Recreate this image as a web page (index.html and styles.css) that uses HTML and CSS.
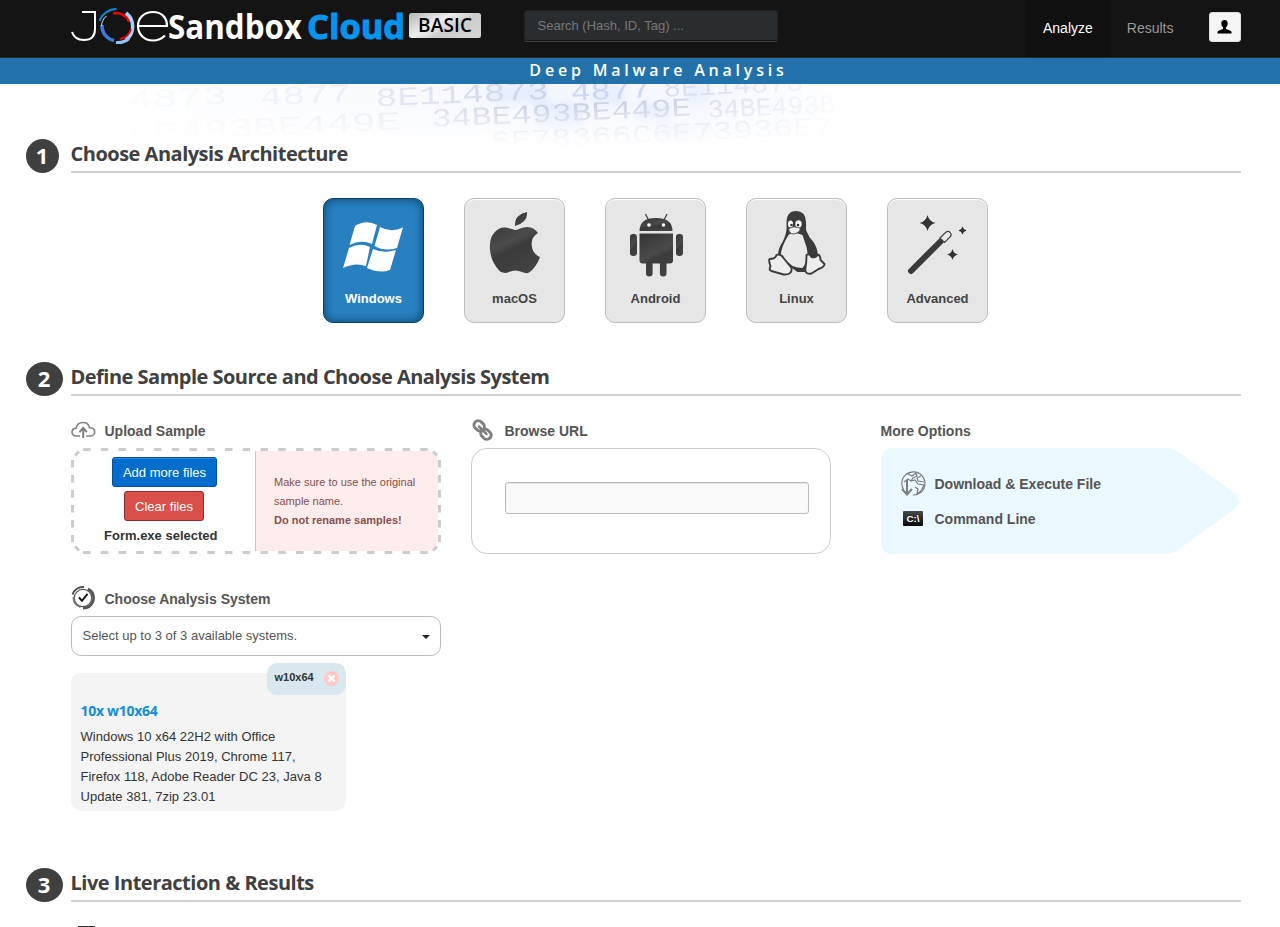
FILE: index.html
```html
<!DOCTYPE html>
<html lang="en">
<head>
<meta charset="utf-8">
<title>Joe Sandbox Cloud Basic</title>
<link rel="stylesheet" href="styles.css">
</head>
<body>
<header class="navbar">
  <svg class="logo" width="412" height="50" viewBox="70 0 412 50">
    <defs><linearGradient id="silver" x1="0" y1="0" x2="1" y2=".6"><stop offset="0" stop-color="#b4b4b4"/><stop offset=".45" stop-color="#eee"/><stop offset=".7" stop-color="#ccc"/><stop offset="1" stop-color="#d2d2d2"/></linearGradient></defs>
    <path d="M82 12h13v17c0 8-4 11-11 11-6 0-10-2-12-8" fill="none" stroke="#fff" stroke-width="2"/>
    <g fill="none">
      <path d="M99.500 21a18 18 0 0 1 17-12" stroke="#0b8ad8" stroke-width="2"/>
      <path d="M113 13.500a13.500 13.500 0 0 1 16 8.500" stroke="#e00" stroke-width="2.400"/>
      <path d="M126 13a17 17 0 0 1 0 27" stroke="#a5d2f7" stroke-width="3.500"/>
      <path d="M131 29a14 14 0 0 1-11 10" stroke="#e00" stroke-width="1.800"/>
      <path d="M102 25a15 15 0 0 0 12 15.500" stroke="#3c7bdd" stroke-width="3.500"/>
      <path d="M101.500 26a14 14 0 0 1 5-10" stroke="#ddd"/>
      <path d="M116 42.500a17 17 0 0 0 13-4" stroke="#8bc5f5" stroke-width="3"/>
      <path d="M138 26h29c0-9-6-14-14-14-9 0-15 6-15 14s6 14.500 15 14.500c5 0 9-2 12-5" stroke="#fff" stroke-width="2.200"/>
    </g>
    <text class="logo-face" x="168" y="38.500" textLength="134" lengthAdjust="spacingAndGlyphs" fill="#fff">Sandbox</text>
    <text class="logo-face logo-cloud" x="307" y="38.500" textLength="98" lengthAdjust="spacingAndGlyphs" fill="#0094ec" stroke="#0094ec">Cloud</text>
    <rect x="409" y="13" width="72" height="25" rx="2.500" fill="url(#silver)"/>
    <text class="logo-basic" x="418" y="32" textLength="54" lengthAdjust="spacing">BASIC</text>
  </svg>
  <div class="search">Search (Hash, ID, Tag) ...</div>
  <nav class="nav"><a class="nav-item active">Analyze</a><a class="nav-item">Results</a></nav>
  <button class="user" aria-label="Account"><svg width="16" height="16" viewBox="0 0 16 16"><path d="M7.500 1C5.300 1 4.200 2.500 4.300 4.500c0 1.700.8 3 1.700 3.800v1.700L2 11.500Q.5 12 .5 13v1.500h14V13q0-1-1.500-1.500L9 10V8.300c.9-.8 1.700-2.100 1.700-3.800C10.800 2.500 9.700 1 7.500 1z"/></svg></button>
</header>
<div class="tagline"><span>Deep Malware Analysis</span></div>
<main class="page">
  <svg class="digits" width="900" height="70" viewBox="0 84 900 70" aria-hidden="true">
    <defs>
      <linearGradient id="fx"><stop offset=".08" stop-color="#000"/><stop offset=".4" stop-color="#777"/><stop offset=".6" stop-color="#fff"/><stop offset=".8" stop-color="#ccc"/><stop offset=".95" stop-color="#000"/></linearGradient>
      <linearGradient id="fy" x2="0" y2="1"><stop offset=".3" stop-color="#fff" stop-opacity="0"/><stop offset=".9" stop-color="#fff"/></linearGradient>
      <mask id="fade"><rect y="84" width="900" height="70" fill="url(#fx)"/></mask>
      <filter id="soft"><feGaussianBlur stdDeviation="3"/></filter>
    </defs>
    <g mask="url(#fade)">
      <rect x="60" y="84" width="800" height="62" fill="#f4f7fe"/>
      <path filter="url(#soft)" d="M487 84h60v19h-60zM592 84h32v21h-32zM686 84h22v18h-22zM535 102h50v27h-50zM636 103h36v20h-36zM660 125h50v20h-50z" fill="#e6eeff"/>
      <g class="hex" fill="#d6dbe9">
        <g transform="rotate(-2.500 450 104)"><text x="128" y="94" textLength="100" lengthAdjust="spacingAndGlyphs">4873</text><text x="260" y="97" textLength="92" lengthAdjust="spacingAndGlyphs">4877</text>
        <text x="376" y="103" textLength="173" lengthAdjust="spacingAndGlyphs" fill="#cdd5e8">8E114873</text><text x="571" y="106" textLength="80" lengthAdjust="spacingAndGlyphs" fill="#c9d5f5">4877</text><text x="664" y="106" textLength="140" lengthAdjust="spacingAndGlyphs">8E114873</text></g>
        <g transform="rotate(-2.500 450 125)"><text x="105" y="127" textLength="296" lengthAdjust="spacingAndGlyphs">4BE493BE449E</text><text x="432" y="126" textLength="260" lengthAdjust="spacingAndGlyphs" fill="#cad0e3">34BE493BE449E</text><text x="708" y="129" textLength="128" lengthAdjust="spacingAndGlyphs">34BE493B</text>
        <text x="490" y="151" textLength="343" lengthAdjust="spacingAndGlyphs">6E78366C6E73936E7</text></g>
      </g>
    </g>
    <rect y="84" width="900" height="70" fill="url(#fy)"/>
  </svg>

  <section class="step step-arch">
    <div class="step-head"><span class="num num-one">1</span><h2 class="t1">Choose Analysis Architecture</h2></div>
    <div class="cards">
      <div class="card selected"><svg width="70" height="75" viewBox="0 0 70 75"><path fill="#fff" d="M16 20Q27 13 38 19L33 38Q22 33 10.500 39zM41 21Q52 27 64 21.500L58 42Q46 46 35.500 40zM10 42Q21 36 31 41L27 60Q16 56 4 62zM34 43Q45 48 57 44L51 64Q41 68 28 62z" transform="translate(0 -1)"/></svg><b>Windows</b></div>
      <div class="card"><svg width="70" height="75" viewBox="0 0 70 75"><defs><linearGradient id="metal" x1=".3" y1="0" x2=".7" y2="1"><stop offset="0" stop-color="#373737"/><stop offset=".45" stop-color="#4b4b4b"/><stop offset=".58" stop-color="#3b3b3b"/><stop offset="1" stop-color="#434343"/></linearGradient></defs><path fill="url(#metal)" d="M35 23Q37 23 40 21.500Q52 17 58 26Q50 31 52 40Q53 47 60 50Q56 61 49 65.500Q46 67 42 65Q35 62 29 65Q25 67 20 64.500Q11 55 10 43Q9 32 14 26Q20 18 30 21.500zM35 19Q34 8 47 5Q48 15 35 19z"/></svg><b>macOS</b></div>
      <div class="card"><svg width="70" height="75" viewBox="0 0 70 75"><g fill="url(#metal)"><path d="M18.500 24Q18.500 11 35 11Q51.500 11 51.500 24z"/><path d="M18.500 26.500h33.500v27q0 3-3 3h-3.500v10q0 3-3.300 3t-3.300-3v-10h-7.300v10q0 3-3.300 3t-3.300-3v-10h-3.500q-3 0-3-3z"/><rect x="9" y="27" width="7" height="22" rx="3"/><rect x="55" y="27" width="7" height="22" rx="3"/></g><path d="M24.500 7l3 6M46 7l-3 6" stroke="#444" stroke-width="1.300"/><circle cx="28" cy="18" r="1.800" fill="#fff"/><circle cx="42.500" cy="18" r="1.800" fill="#fff"/></svg><b>Android</b></div>
      <div class="card"><svg width="70" height="75" viewBox="0 0 70 75"><g transform="translate(-.5 1)"><path fill="#3b3b3b" d="M25 15Q25 3 34.500 3Q44 3 44.500 14V22Q47 29 52 34Q57 42 56 48L54 64L36 64L17 50Q15 43 21 34Q26 25 25 15z"/><path fill="#e9e9e9" d="M27 27Q31 23 41 27L45 39Q48 51 41 60Q36 60 31 58L19 48Q20 38 27 27z"/><g fill="#fff"><ellipse cx="29" cy="16" rx="2.500" ry="3.500"/><ellipse cx="37" cy="16" rx="3.200" ry="3.700"/></g><circle cx="30" cy="17" r="1.300" fill="#333"/><circle cx="36.500" cy="17" r="1.300" fill="#333"/><path fill="#eee" stroke="#3b3b3b" stroke-width=".8" d="M27 21Q32 17 39 20.500Q38 25 32 26Q28 26 27 21z"/><g fill="#eee" stroke="#3b3b3b" stroke-width="1.900" stroke-linejoin="round"><path d="M8 51Q14 51 15 47Q19 45 22 50L30 60Q31 67 22 66.500L10 63Q7 62 9 58Q7 53 8 51z"/><path d="M45 47Q48 45 50 49Q55 50 56 46.500Q59 47 59 52L63 56Q63 59 57 61L50 65.500Q43 67 44 60Q45 54 45 47z"/></g></g></svg><b>Linux</b></div>
      <div class="card"><svg width="70" height="75" viewBox="0 0 70 75"><g transform="translate(-.5 1)"><path d="M8.500 63L39 32.500" stroke="#393939" stroke-width="6" stroke-linecap="round"/><path d="M37.500 30L43 24.500Q46 22 48 25Q49.500 27 47.500 29L42 34.500z" fill="#e8e8e8" stroke="#444" stroke-width="1.200"/><path fill="#333" d="M25 7q1.500 6.500 8 8q-6.500 1.500-8 8q-1.500-6.500-8-8q6.500-1.500 8-8zM60 18.500q.8 3.200 4 4q-3.200.8-4 4q-.8-3.200-4-4q3.200-.8 4-4zM50 41q1 4.500 5.500 5.500q-4.500 1-5.500 5.500q-1-4.500-5.500-5.500q4.500-1 5.500-5.500z"/></g></svg><b>Advanced</b></div>
    </div>
  </section>

  <section class="step step-source">
    <div class="step-head"><span class="num">2</span><h2 class="t2">Define Sample Source and Choose Analysis System</h2></div>
    <div class="sources">
      <div class="col-upload">
        <h3><svg class="ico" width="25" height="26" viewBox="0 0 25 26"><path d="M9 18H5.500C2.500 18 1 16.500 1 14.300s1.800-4 4.200-4.200C6 5.500 9 4.500 12 4.500c4 0 6 2.300 6.500 5.300 3.500 0 5.200 2 5.200 4.200s-2 4-5 4h-3.500" fill="none" stroke="#808080" stroke-width="1.600"/><path d="M12.200 20V10.500M8.500 14l3.700-4 3.700 4" fill="none" stroke="#808080" stroke-width="2"/></svg>Upload Sample</h3>
        <div class="drop">
          <svg class="dash" width="370" height="106"><path d="M12 1.500H358M12 104.500H358" stroke-dasharray="7.500 10.250"/><path d="M1.500 12V94M368.500 12V94" stroke-dasharray="7.500 7.500"/><path d="M4 7.500L8 3.500M362 3.500L366 7.500M4 98.500L8 102.500M362 102.500L366 98.500"/></svg>
          <div class="files"><button class="btn blue">Add more files</button><button class="btn red">Clear files</button><b>Form.exe selected</b></div>
          <div class="warn">Make sure to use the original sample name.<br><b>Do not rename samples!</b></div>
        </div>
      </div>
      <div class="col-url">
        <h3><svg class="ico" width="25" height="26" viewBox="0 0 25 26"><g fill="none" stroke="#808080" stroke-width="3"><rect x="2.500" y="3.500" width="11" height="8.500" rx="4.200" transform="rotate(43 8 8)"/><rect x="9.500" y="12" width="11" height="8.500" rx="4.200" transform="rotate(43 15 16.200)"/></g><path d="M8 8.500l7.500 7.500" stroke="#808080" stroke-width="2.500" stroke-linecap="round"/></svg>Browse URL</h3>
        <div class="urlbox"><div class="field"></div></div>
      </div>
      <div class="col-more">
        <h3 class="bare">More Options</h3>
        <div class="more">
          <svg class="arrow" width="360" height="106"><path d="M12 0H285Q291 0 297 4L354 45.500Q362 53 354 60.500L297 102Q291 106 285 106H12Q0 106 0 94V12Q0 0 12 0z" fill="#eaf8ff"/></svg>
          <div class="opt"><svg width="26" height="26" viewBox="0 0 26 26"><g fill="none" stroke="#7d7d7d" stroke-width="1.200"><path d="M2.500 18C1 16 .8 14 .8 12a11.600 11.600 0 1 1 11 12"/><path d="M7 3l4 2 4-3 1 3-4 2-2 3-3-2-4 3M20 5l-4 2 1 3 6 1M10 10l4-1 3 4 6 1-3 6-4 3 1-5-3-2"/><path d="M6 9v14M1 18l5 5.500 5-5.500" stroke-width="2"/></g></svg>Download &amp; Execute File</div>
          <div class="opt"><svg width="26" height="26" viewBox="0 0 26 26"><defs><linearGradient id="term" x2="0" y2="1"><stop stop-color="#4a4a4a"/><stop offset="1" stop-color="#080808"/></linearGradient></defs><rect x="2" y="5" width="20" height="15" rx="1" fill="url(#term)"/><text x="5.500" y="15.500" class="term" textLength="13" lengthAdjust="spacingAndGlyphs">C:\</text></svg>Command Line</div>
        </div>
      </div>
    </div>
    <div class="system">
      <h3><svg class="ico" width="25" height="26" viewBox="0 0 25 26"><g fill="none"><circle cx="12" cy="13" r="8.700" stroke="#555" stroke-width="1.200"/><path d="M1.500 9.500Q4 2 13 1.800" stroke="#444" stroke-width="1.800"/><path d="M17 4Q24.500 8 22 16.500Q19.500 23 12 23.300" stroke="#555" stroke-width="2.600"/><path d="M2.500 12Q2.500 19.500 9.500 22" stroke="#777" stroke-width="2"/><path d="M8 12.500l3 3.300 5.500-7" stroke="#111" stroke-width="1.900"/></g></svg>Choose Analysis System</h3>
      <div class="select"><span>Select up to 3 of 3 available systems.</span><i class="caret"></i></div>
      <article class="sys">
        <div class="tag">w10x64<svg width="15" height="15" viewBox="0 0 15 15"><circle cx="7.500" cy="7.500" r="7.500" fill="#ffc7c7"/><path d="M4.300 4.300l6.400 6.400M10.700 4.300l-6.400 6.400" stroke="#fff" stroke-width="2.500"/></svg></div>
        <h4>10x w10x64</h4>
        <p>Windows 10 x64 22H2 with Office Professional Plus 2019, Chrome 117, Firefox 118, Adobe Reader DC 23, Java 8 Update 381, 7zip 23.01</p>
      </article>
    </div>
  </section>

  <section class="step step-live">
    <div class="step-head"><span class="num">3</span><h2 class="t3">Live Interaction &amp; Results</h2></div>
    <div class="check"></div>
  </section>
</main>
</body>
</html>
```

FILE: styles.css
```css
* { box-sizing: border-box; }
body { margin: 0; height: 927px; overflow: hidden; background: #fff; color: #333; font: 13px/20px "Liberation Sans", Arial, sans-serif; }
h2, h3, h4, p { margin: 0; }
button { font: inherit; padding: 0; }

.navbar { display: flex; align-items: flex-start; height: 58px; padding: 0 39px 0 70px; background: #141414; border-bottom: 1px solid #252525; }
.logo { flex: none; overflow: visible; }
.logo-face { font: 700 34px "Open Sans", sans-serif; }
.logo-cloud { stroke-width: 1; }
.logo-basic { font: 600 19px "Open Sans", sans-serif; fill: #000; }
.search { width: 254px; height: 32px; margin: 10px 0 0 42px; padding-left: 12.5px; line-height: 30px; border-radius: 3px; background: #2a2d30; color: #777; border: 1px solid #222; border-bottom-color: #444; box-shadow: inset 0 -1px #141414; }
.nav { display: flex; margin-left: auto; }
.nav-item { height: 57px; padding: 0 17px; line-height: 56px; font-size: 14px; color: #999; }
.nav-item.active { color: #fff; background: #101010; }
.user { display: flex; align-items: center; justify-content: center; width: 32px; height: 30px; margin: 12px 0 0 18.5px; background: #f5f5f5; border: 1px solid #ddd; border-radius: 3px; }

.tagline { display: flex; justify-content: center; height: 26px; padding-left: 34px; background: #2271ab; color: #fff; font: 600 16px/25px "Open Sans", sans-serif; letter-spacing: 3.8px; white-space: nowrap; }
.tagline span { margin-right: -3px; }

.page { position: relative; padding: 55px 39px 0 26px; }
.digits { position: absolute; left: 0; top: 0; }
.hex text { font: 26px "Liberation Mono", monospace; stroke: currentColor; stroke-width: 0; }
.step { position: relative; }
.step-head { display: flex; height: 34px; }
.num { width: 37px; height: 34px; margin-right: 8px; padding-right: 1px; border-radius: 50%; background: #404040; color: #fff; text-align: center; font: 700 22px/33px "Open Sans", sans-serif; }
.num-one { width: 33px; margin-right: 12px; }
h2 { flex: 1; border-bottom: 2px solid #d0d0d0; color: #404040; font: 700 20px/30px "Open Sans", sans-serif; white-space: nowrap; text-indent: -.5px; }
.t1 { letter-spacing: -.5px; }
.t2 { letter-spacing: -.51px; }
.t3 { letter-spacing: -.49px; }

.cards { display: flex; gap: 40px; margin: 25px 0 0 297px; }
.card { display: flex; flex-direction: column; align-items: center; width: 101px; height: 125px; padding-top: 8px; border: 1px solid #bdbdbd; border-radius: 10px; background: #e6e6e6; color: #444; box-shadow: inset 0 1px 1px #fff; }
.card b { margin-top: 7px; }
.card.selected { background: #2880c0; color: #fff; border-color: #0c3f69; box-shadow: inset 0 0 10px #0a4169; }

.step-source { margin-top: 39px; }
.sources { display: flex; margin: 22px 0 0 45px; }
.col-upload { width: 370px; margin-right: 30px; }
.col-url { width: 360px; margin-right: 50px; }
.col-more { width: 360px; }
h3 { display: flex; height: 30px; color: #555; font-size: 14px; line-height: 27px; }
h3.bare { text-indent: -.5px; }
.ico { margin-right: 8.5px; }
.drop { position: relative; display: flex; height: 106px; padding: 3px; }
.dash { position: absolute; inset: 0; fill: none; stroke: #ccc; stroke-width: 3; }
.files { display: flex; flex-direction: column; align-items: center; width: 181px; padding-top: 6px; }
.files b { margin: 1px 7.5px 0 0; }
.btn { height: 30px; margin-bottom: 4px; padding: 0 10px; border-radius: 3px; border: 1px solid; color: #fff; }
.blue { width: 105px; padding: 0; line-height: 29px; background: #006dcc; border-color: #00509b; box-shadow: inset 0 1px #2b87d8; }
.red { width: 80px; margin-right: 1px; padding: 0; line-height: 29px; background: #da4f4a; border-color: #8c2d2b; }
.warn { flex: 1; padding: 22px 18px 0; background: #ffeded; border-left: 1px solid #e0bcbc; border-radius: 0 12px 12px 0; color: #85504e; font-size: 11px; line-height: 19px; }
.urlbox { height: 106px; padding: 33px 21px 0 33px; border: 1px solid #ccc; border-radius: 16px; }
.field { height: 32px; background: #f9f9f9; border: 1px solid #bbb; border-radius: 3px; box-shadow: inset 0 1px 1px #e5e5e5; }
.more { position: relative; display: flex; flex-direction: column; gap: 9px; height: 106px; padding: 23px 0 0 20px; }
.arrow { position: absolute; left: 0; top: 0; }
.opt { position: relative; display: flex; gap: 7.5px; height: 26px; color: #555; font-size: 14px; font-weight: 700; line-height: 26px; }
.term { font: 700 9px "Liberation Sans", sans-serif; fill: #fff; }

.system { margin: 32px 0 0 45px; }
.system h3 { line-height: 26px; }
.system .ico { margin-top: -1px; }
.select { display: flex; align-items: center; justify-content: space-between; width: 370px; height: 40px; padding: 0 10px 0 10.5px; border: 1px solid #bbb; border-radius: 10px; color: #555; }
.caret { border: 4px solid transparent; border-top-color: #222; border-bottom: 0; margin-top: 1px; }
.sys { position: relative; width: 275px; height: 138px; margin-top: 17px; padding: 28px 10px 0 9.5px; border-radius: 10px; background: #f4f4f4; }
.tag { position: absolute; right: 0; top: -10px; display: flex; justify-content: space-between; width: 79px; height: 32px; padding: 8px 7px 0 7.5px; border-radius: 10px; background: #d8e8ee; font-size: 11px; font-weight: 700; line-height: 12px; }
h4 { color: #0f8fd6; font: 700 14px/20px "Open Sans", sans-serif; letter-spacing: -.3px; }
.sys p { margin-top: 6px; color: #333; letter-spacing: .02px; }
.step-live { margin-top: 57px; }
.check { width: 17px; height: 17px; margin: 24px 0 0 52px; border: 1px solid #333; }
```
